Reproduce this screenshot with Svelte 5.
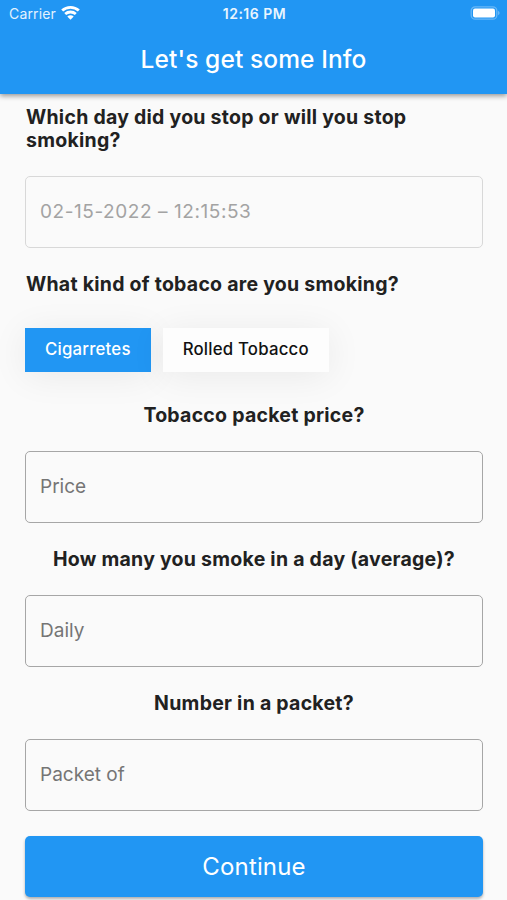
<script>
    let tobacco = 'Cigarretes';
    const kinds = ['Cigarretes', 'Rolled Tobacco'];
    const questions = [
        { title: 'Tobacco packet price?', hint: 'Price' },
        { title: 'How many you smoke in a day (average)?', hint: 'Daily' },
        { title: 'Number in a packet?', hint: 'Packet of' }
    ];
</script>

<div class="screen">
    <header>
        <div class="status">
            <div class="carrier">
                <span>Carrier</span>
                <svg width="19" height="15" viewBox="0 0 19 15" fill="none" stroke="#fff" stroke-width="2.8">
                    <path d="M1.200 5.600C5.800 1.200 13.200 1.200 17.800 5.600" />
                    <path d="M4.200 9c3-2.700 7.600-2.700 10.600 0" />
                    <path d="M6.300 11.500c1.900-1.700 4.500-1.700 6.400 0L9.500 14.700z" fill="#fff" stroke="none" />
                </svg>
            </div>
            <span class="time">12:16 PM</span>
            <svg class="battery" width="30" height="14" viewBox="0 0 30 14">
                <rect x="1.200" y=".8" width="25.600" height="12.400" rx="4" fill="none" stroke="#fff" stroke-width="1.300" stroke-opacity=".32" />
                <rect x="3" y="2.500" width="22" height="9" rx="2" fill="#fff" />
                <path d="M28.200 4.800c1.800.8 1.800 3.600 0 4.400z" fill="#fff" fill-opacity=".4" />
            </svg>
        </div>
        <h1>Let's get some Info</h1>
    </header>

    <main>
        <h2 class="left first">Which day did you stop or will you stop smoking?</h2>
        <input class="date" type="text" placeholder="02-15-2022 – 12:15:53" disabled />

        <h2 class="left">What kind of tobaco are you smoking?</h2>
        <div class="kinds">
            {#each kinds as kind}
                <button class:active={tobacco === kind} on:click={() => tobacco = kind}>{kind}</button>
            {/each}
        </div>

        {#each questions as q}
            <h2>{q.title}</h2>
            <input type="text" placeholder={q.hint} />
        {/each}

        <button class="continue">Continue</button>
    </main>
</div>

<style>
    :global(body) {
        background: #fafafa;
        overflow: hidden;
    }

    .screen {
        height: 900px;
        overflow: hidden;
        font-family: Inter, 'Liberation Sans', sans-serif;
        color: #212121;
    }

    header {
        height: 94px;
        background: #2196f3;
        color: white;
        box-shadow: 0 2px 5px rgba(0, 0, 0, 0.4);
    }

    .status {
        display: grid;
        grid-template-columns: 1fr auto 1fr;
        align-items: center;
        height: 27px;
        padding: 0 7px 0 9px;
        font-size: 14px;
    }

    .carrier {
        display: flex;
        align-items: center;
        gap: 5px;
        letter-spacing: 0.15px;
        color: #e3f2fe;
    }

    .carrier svg {
        margin-top: -2px;
    }

    .time {
        font-weight: 600;
        letter-spacing: 0.5px;
        color: #e9f5fe;
    }

    .battery {
        justify-self: end;
        margin-top: -1px;
    }

    h1 {
        margin: 0;
        line-height: 65px;
        font-size: 24.5px;
        font-weight: 500;
        letter-spacing: 0.1px;
        text-align: center;
    }

    main {
        padding: 0 24px 0 25px;
    }

    h2 {
        margin: 0 0 24px;
        font-size: 19.5px;
        line-height: 23px;
        font-weight: 650;
        letter-spacing: 0.25px;
        text-align: center;
    }

    h2.left {
        padding-left: 1px;
        text-align: left;
    }

    h2.first {
        padding-top: 12px;
    }

    input {
        display: block;
        box-sizing: border-box;
        width: 100%;
        height: 72px;
        margin: 0 0 25px;
        padding: 0 14px 2px;
        border: 1px solid #a6a6a6;
        border-radius: 5px;
        background: transparent;
        font: 19px Inter, sans-serif;
    }

    input::placeholder {
        color: #757575;
        opacity: 1;
    }

    .date {
        border-color: #d8d8d8;
        letter-spacing: 0.57px;
    }

    .date::placeholder {
        color: #a3a3a3;
    }

    .kinds {
        display: flex;
        gap: 12px;
        margin: 32px 0;
    }

    .kinds button {
        height: 44px;
        padding: 0 20px 2px;
        border: none;
        background: #fdfdfd;
        color: #111;
        font: 500 16.8px Inter, sans-serif;
        letter-spacing: 0.2px;
        box-shadow: 0 4px 36px rgba(0, 0, 0, 0.07);
    }

    .kinds button.active {
        background: #2196f3;
        color: white;
    }

    .continue {
        width: 100%;
        height: 61px;
        border: none;
        border-radius: 5px;
        background: #2196f3;
        color: white;
        font: 24px Inter, sans-serif;
        letter-spacing: 0.15px;
        box-shadow: 0 2px 3px rgba(0, 0, 0, 0.3);
    }
</style>
